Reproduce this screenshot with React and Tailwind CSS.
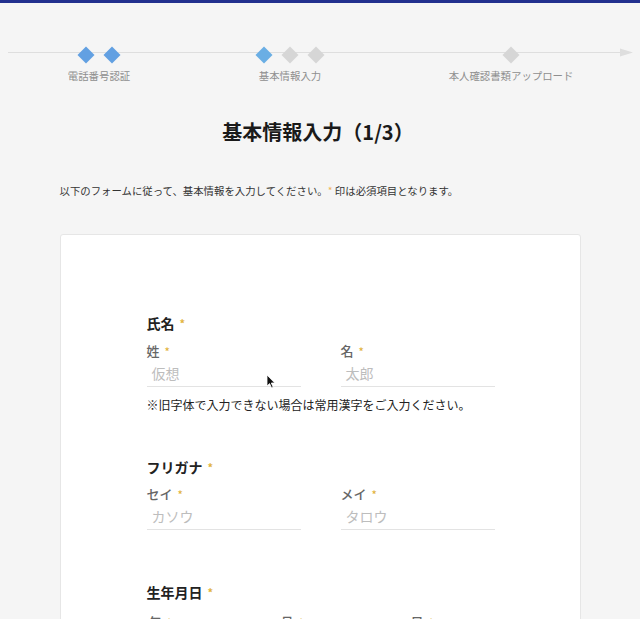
import React from "react";

const JP = { fontFamily: '"Noto Sans CJK JP", "Noto Sans", sans-serif' };

function Diamond({ color }) {
  return <div className={`w-3 h-3 rotate-45 ${color}`} />;
}

function Req() {
  return <span className="text-[#e2b340] ml-[5px] text-[11px] align-top">*</span>;
}

function Field({ label, placeholder }) {
  return (
    <div className="w-[154px] flex flex-col">
      <div className="text-[13px] leading-[18px] font-medium text-[#666]">
        {label}
        <Req />
      </div>
      <div className="mt-[1px] h-[26px] border-b border-[#e3e3e3] pl-[5px] text-[14px] leading-[24px] text-[#bdbdbd]">
        {placeholder}
      </div>
    </div>
  );
}

function GroupLabel({ children }) {
  return (
    <div className="text-[14px] leading-[20px] font-bold text-[#222]">
      {children}
      <Req />
    </div>
  );
}

export default function App() {
  return (
    <div className="w-[640px] h-[619px] overflow-hidden bg-[#f5f5f5] relative" style={JP}>
      <div className="h-[3px] bg-[#22308e]" />
      {/* stepper */}
      <div className="relative h-[80px]">
        <div className="absolute left-[8px] right-[14px] top-[49px] h-px bg-[#dedede]" />
        <svg className="absolute left-[620px] top-[44px]" width="14" height="12" viewBox="0 0 14 12">
          <polygon points="0,1.5 13,5.5 0,9.5" fill="#dedede" />
        </svg>
        <div className="flex pt-[43px] relative">
          <div className="w-[198px] flex flex-col items-center">
            <div className="h-[17px] flex items-center gap-[14px]">
              <Diamond color="bg-[#62a0e2]" />
              <Diamond color="bg-[#62a0e2]" />
            </div>
            <div className="mt-[6px] text-[10.4px] leading-[14px] text-[#8f8f8f]">電話番号認証</div>
          </div>
          <div className="w-[184px] flex flex-col items-center">
            <div className="h-[17px] flex items-center gap-[14px]">
              <Diamond color="bg-[#6aaee4]" />
              <Diamond color="bg-[#d6d6d6]" />
              <Diamond color="bg-[#d6d6d6]" />
            </div>
            <div className="mt-[6px] text-[10.4px] leading-[14px] text-[#8f8f8f]">基本情報入力</div>
          </div>
          <div className="flex-1 flex flex-col items-center">
            <div className="h-[17px] flex items-center gap-[14px]">
              <Diamond color="bg-[#d6d6d6]" />
            </div>
            <div className="mt-[6px] text-[10.4px] leading-[14px] text-[#8f8f8f]">本人確認書類アップロード</div>
          </div>
        </div>
      </div>

      <h1 className="mt-[35px] text-center text-[20px] leading-[28px] font-bold text-[#1a1a1a] pr-[4px]">
        基本情報入力（1/3）
      </h1>

      <div className="w-[521px] mx-auto">
        <p className="mt-[37px] text-[10.4px] leading-[16px] text-[#333]">
          以下のフォームに従って、基本情報を入力してください。<span className="text-[#f0b456]">*</span> 印は必須項目となります。
        </p>

        <div className="mt-[35px] bg-white border border-[#e6e6e6] rounded-[3px] h-[420px] pl-[86px] pt-[78px] relative">
          <GroupLabel>氏名</GroupLabel>
          <div className="mt-[9px] flex gap-[40px]">
            <Field label="姓" placeholder="仮想" />
            <Field label="名" placeholder="太郎" />
          </div>
          <div className="mt-[9px] text-[12px] leading-[18px] text-[#222]">
            ※旧字体で入力できない場合は常用漢字をご入力ください。
          </div>

          <div className="mt-[43px]">
            <GroupLabel>フリガナ</GroupLabel>
          </div>
          <div className="mt-[8px] flex gap-[40px]">
            <Field label="セイ" placeholder="カソウ" />
            <Field label="メイ" placeholder="タロウ" />
          </div>

          <div className="mt-[52px]">
            <GroupLabel>生年月日</GroupLabel>
          </div>
          <div className="mt-[11px] flex text-[13px] leading-[18px] font-medium text-[#666]">
            <div className="w-[134px] pl-[2px]">年<Req /></div>
            <div className="w-[130px]">月<Req /></div>
            <div>日<Req /></div>
          </div>

          <svg className="absolute left-[205px] top-[139px]" width="10" height="15" viewBox="0 0 10 15">
            <path d="M1 1 L1 12 L3.6 9.6 L5.6 14 L7.2 13.3 L5.3 9 L8.8 9 Z" fill="#111" stroke="#fff" strokeWidth="0.8" />
          </svg>
        </div>
      </div>
    </div>
  );
}
